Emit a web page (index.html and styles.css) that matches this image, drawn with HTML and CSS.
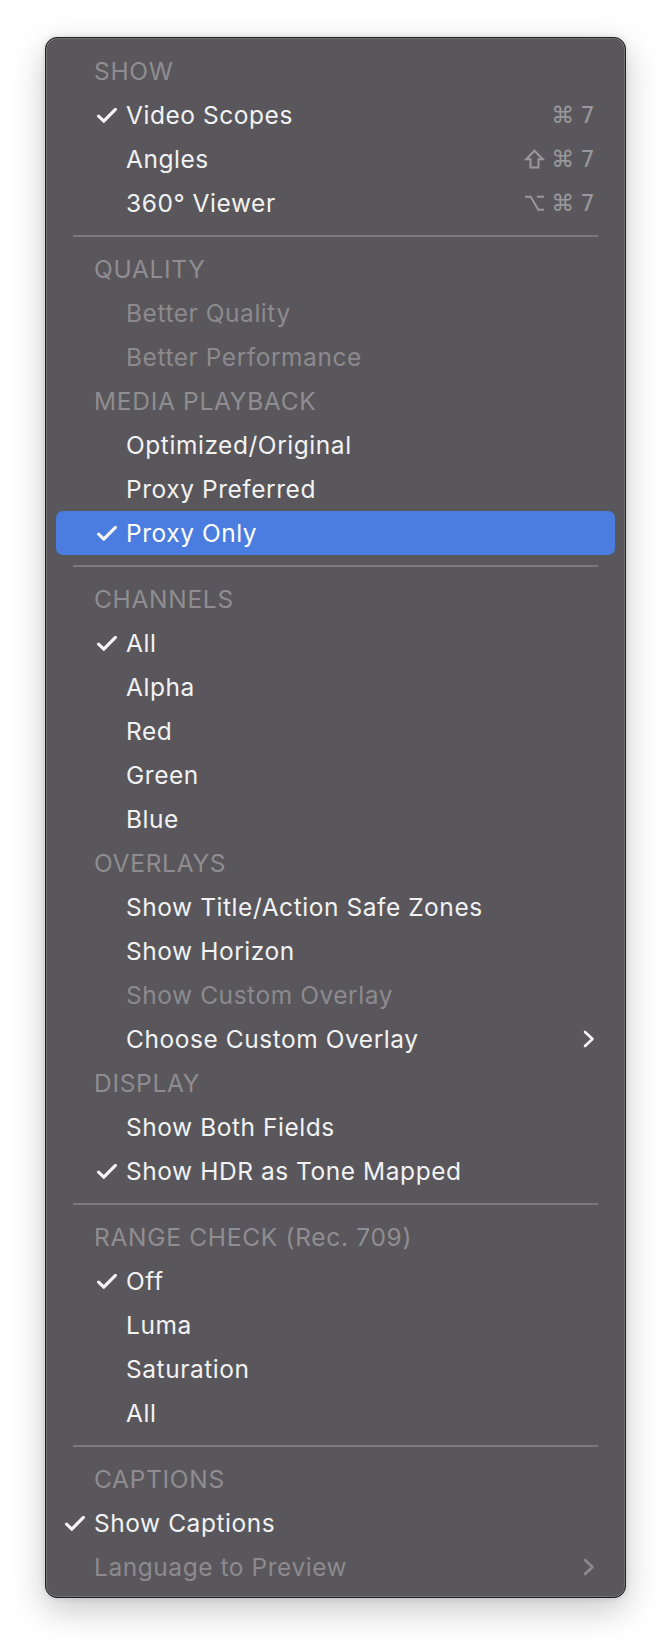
FILE: index.html
```html
<!DOCTYPE html>
<html>
<head>
<meta charset="utf-8">
<link rel="stylesheet" href="styles.css">
</head>
<body>
<div class="menu">
  <div class="hdr">SHOW</div>
  <div class="item"><span class="chk"><svg viewBox="0 0 20 15"><path d="M1.6 8.2 L6.8 13.2 L18.4 1.4"/></svg></span><span class="lbl">Video Scopes</span><span class="keys"><span>⌘</span><span>7</span></span></div>
  <div class="item"><span class="chk"></span><span class="lbl">Angles</span><span class="keys"><svg class="sym" viewBox="0 0 20 20"><path d="M10 1.8 L18.2 10.2 H14 V18.4 H6 V10.2 H1.8 Z"/></svg><span>⌘</span><span>7</span></span></div>
  <div class="item"><span class="chk"></span><span class="lbl">360° Viewer</span><span class="keys"><svg class="sym" viewBox="0 0 22 20"><path d="M1 3.5 H7 L15 17 H21 M13.5 3.5 H21"/></svg><span>⌘</span><span>7</span></span></div>
  <div class="sep"></div>
  <div class="hdr">QUALITY</div>
  <div class="item off"><span class="chk"></span><span class="lbl">Better Quality</span></div>
  <div class="item off"><span class="chk"></span><span class="lbl">Better Performance</span></div>
  <div class="hdr">MEDIA PLAYBACK</div>
  <div class="item"><span class="chk"></span><span class="lbl">Optimized/Original</span></div>
  <div class="item"><span class="chk"></span><span class="lbl">Proxy Preferred</span></div>
  <div class="item hl"><span class="chk"><svg viewBox="0 0 20 15"><path d="M1.6 8.2 L6.8 13.2 L18.4 1.4"/></svg></span><span class="lbl">Proxy Only</span></div>
  <div class="sep"></div>
  <div class="hdr">CHANNELS</div>
  <div class="item"><span class="chk"><svg viewBox="0 0 20 15"><path d="M1.6 8.2 L6.8 13.2 L18.4 1.4"/></svg></span><span class="lbl">All</span></div>
  <div class="item"><span class="chk"></span><span class="lbl">Alpha</span></div>
  <div class="item"><span class="chk"></span><span class="lbl">Red</span></div>
  <div class="item"><span class="chk"></span><span class="lbl">Green</span></div>
  <div class="item"><span class="chk"></span><span class="lbl">Blue</span></div>
  <div class="hdr">OVERLAYS</div>
  <div class="item"><span class="chk"></span><span class="lbl">Show Title/Action Safe Zones</span></div>
  <div class="item"><span class="chk"></span><span class="lbl">Show Horizon</span></div>
  <div class="item off"><span class="chk"></span><span class="lbl">Show Custom Overlay</span></div>
  <div class="item"><span class="chk"></span><span class="lbl">Choose Custom Overlay</span><svg class="chev" viewBox="0 0 12 18"><path d="M2 2 L9.5 9 L2 16"/></svg></div>
  <div class="hdr">DISPLAY</div>
  <div class="item"><span class="chk"></span><span class="lbl">Show Both Fields</span></div>
  <div class="item"><span class="chk"><svg viewBox="0 0 20 15"><path d="M1.6 8.2 L6.8 13.2 L18.4 1.4"/></svg></span><span class="lbl">Show HDR as Tone Mapped</span></div>
  <div class="sep"></div>
  <div class="hdr">RANGE CHECK (Rec. 709)</div>
  <div class="item"><span class="chk"><svg viewBox="0 0 20 15"><path d="M1.6 8.2 L6.8 13.2 L18.4 1.4"/></svg></span><span class="lbl">Off</span></div>
  <div class="item"><span class="chk"></span><span class="lbl">Luma</span></div>
  <div class="item"><span class="chk"></span><span class="lbl">Saturation</span></div>
  <div class="item"><span class="chk"></span><span class="lbl">All</span></div>
  <div class="sep"></div>
  <div class="hdr">CAPTIONS</div>
  <div class="item flat"><span class="chk"><svg viewBox="0 0 20 15"><path d="M1.6 8.2 L6.8 13.2 L18.4 1.4"/></svg></span><span class="lbl">Show Captions</span></div>
  <div class="item flat off"><span class="chk"></span><span class="lbl">Language to Preview</span><svg class="chev" viewBox="0 0 12 18"><path d="M2 2 L9.5 9 L2 16"/></svg></div>
</div>
</body>
</html>
```

FILE: styles.css
```css
html, body {
  margin: 0;
  padding: 0;
  background: #ffffff;
}
body {
  width: 672px;
  height: 1652px;
  font-family: Inter, "Liberation Sans", sans-serif;
  -webkit-font-smoothing: antialiased;
}
.menu {
  margin: 37px 0 0 45px;
  width: 579px;
  background: #59575b;
  border: 1px solid #1f1f21;
  border-radius: 12px;
  box-shadow: inset 0 0 0 1px rgba(255,255,255,0.16), 0 12px 34px rgba(0,0,0,0.22), 0 0 6px rgba(0,0,0,0.12);
  padding: 11px 0 8px;
  display: flex;
  flex-direction: column;
}
.hdr {
  height: 44px;
  display: flex;
  align-items: center;
  margin: 0 10px;
  padding-left: 38px;
  font-size: 24.5px;
  letter-spacing: 0.7px;
  color: #8f8d91;
}
.item {
  height: 44px;
  display: flex;
  align-items: center;
  margin: 0 10px;
  padding: 0 20px 0 40px;
  font-size: 24.5px;
  letter-spacing: 0.55px;
  color: #f2f2f3;
  border-radius: 7px;
}
.item.flat {
  padding-left: 8px;
}
.item.off {
  color: #8c8a8e;
}
.item.hl {
  background: #4a7ddf;
  color: #ffffff;
}
.chk {
  width: 30px;
  flex: none;
  display: flex;
  align-items: center;
}
.chk svg {
  width: 20px;
  height: 15px;
  margin-left: 1px;
  fill: none;
  stroke: #f4f4f5;
  stroke-width: 3.2;
  stroke-linecap: round;
  stroke-linejoin: round;
}
.lbl {
  flex: 1;
  white-space: nowrap;
}
.keys {
  display: flex;
  align-items: center;
  gap: 6px;
  color: #9a989c;
  font-family: "DejaVu Sans", Inter, sans-serif;
  font-size: 23px;
  letter-spacing: 0;
}
.sym {
  width: 21px;
  height: 20px;
  fill: none;
  stroke: #9a989c;
  stroke-width: 2;
  stroke-linejoin: miter;
}
.chev {
  width: 12px;
  height: 18px;
  fill: none;
  stroke: #f4f4f5;
  stroke-width: 2.6;
  stroke-linecap: round;
  stroke-linejoin: round;
}
.item.off .chev {
  stroke: #8c8a8e;
}
.sep {
  height: 22px;
  display: flex;
  align-items: center;
  margin: 0 27px;
}
.sep::before {
  content: "";
  flex: 1;
  height: 1.5px;
  background: #7b797d;
}
```
